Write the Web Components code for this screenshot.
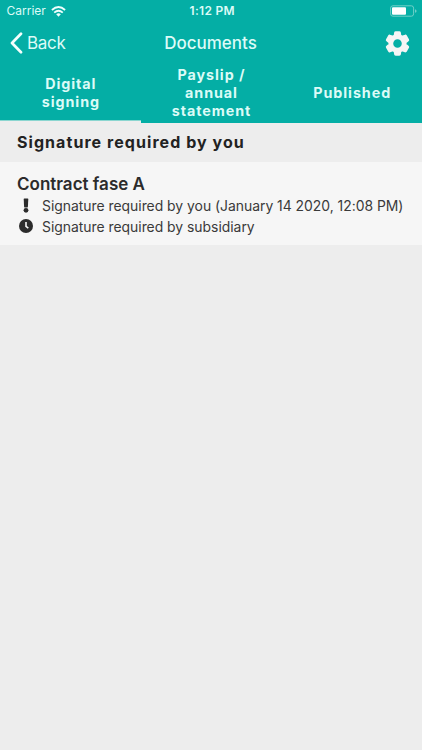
<!DOCTYPE html>
<html lang="en"><head><meta charset="utf-8"><title>Documents</title>
<style>html,body{margin:0;height:100%;background:#ededed;overflow:hidden}</style></head>
<body><documents-screen></documents-screen>
<script>
const define = (name, html) => {
  const t = document.createElement('template');
  t.innerHTML = html;
  customElements.define(name, class extends HTMLElement {
    constructor() {
      super();
      this.attachShadow({mode: 'open'}).append(t.content.cloneNode(true));
    }
  });
};

define('status-bar', `<style>
:host{display:grid;grid-template-columns:1fr auto 1fr;align-items:center;height:22px;padding:0 5px 0 6.5px;box-sizing:border-box;font-size:12px;line-height:22px;color:#dcfbf7}
.l{display:flex;align-items:center;gap:5px;letter-spacing:0}
.t{font-weight:600;letter-spacing:.3px;padding-left:1px}
.r{justify-self:end;display:flex}
svg{display:block}
</style>
<div class="l"><span>Carrier</span><svg width="15" height="11" viewBox="0 0 15 11" fill="none" stroke="#effffd" stroke-width="1.8"><path d="M.9 4Q7.500-1.900 14.100 4M3.200 6.600Q7.500 2.800 11.800 6.600"/><path d="M5.200 8.300Q7.500 6.400 9.800 8.300L7.500 10.800Z" fill="#effffd" stroke="none"/></svg></div>
<span class="t">1:12 PM</span>
<div class="r"><svg width="27" height="12" viewBox="0 0 27 12"><rect x=".6" y=".8" width="23" height="10.4" rx="2.3" fill="none" stroke="#70d0c8" stroke-width="1"/><rect x="2" y="2.2" width="14" height="7.6" rx="1" fill="#fff"/><path d="M25 4.2Q26.6 4.6 26.6 6T25 7.8Z" fill="#70d0c8"/></svg></div>`);

define('nav-bar', `<style>
:host{display:grid;grid-template-columns:1fr auto 1fr;align-items:center;height:42px;padding:0 11px 0 10px;box-sizing:border-box;font-size:17px;line-height:42px;color:#dcfbf7}
.b{display:flex;align-items:center;gap:4px;letter-spacing:-.3px}
.t{font-weight:500}
.g{justify-self:end}
svg{display:block}
</style>
<div class="b"><svg width="13" height="22" viewBox="0 0 13 22"><path d="M11 1.8 2 11l9 9.2" fill="none" stroke="#f4fffd" stroke-width="2.7" stroke-linecap="round" stroke-linejoin="round"/></svg><span><slot name="back"></slot></span></div>
<span class="t"><slot></slot></span>
<svg class="g" width="27" height="27" viewBox="0 0 24 24"><path fill="#f5f5f5" stroke="#f5f5f5" stroke-width="1.8" stroke-linejoin="round" fill-rule="evenodd" d="M19.1 13a7.5 7.5 0 0 0 0-2l2.2-1.7c.2-.1.2-.4.1-.6l-2-3.5c-.1-.2-.4-.3-.6-.2l-2.5 1a7.300 7.300 0 0 0-1.800-1l-.4-2.600A.5.5 0 0 0 13.600 2h-3.200a.5.5 0 0 0-.5.400L9.500 5a7.300 7.300 0 0 0-1.800 1l-2.500-1c-.2-.1-.5 0-.6.2l-2 3.500c-.1.200-.1.500.1.600L4.900 11a7.500 7.500 0 0 0 0 2l-2.200 1.700c-.2.1-.2.400-.1.600l2 3.500c.1.200.4.300.6.200l2.500-1c.5.400 1.100.800 1.800 1l.4 2.600c0 .200.200.400.500.400h3.200c.3 0 .5-.2.5-.4l.4-2.600c.7-.2 1.300-.6 1.800-1l2.500 1c.2.1.5 0 .6-.2l2-3.500c.1-.2.1-.5-.1-.6ZM12 16.700a4.700 4.700 0 1 1 0-9.400 4.700 4.700 0 0 1 0 9.400Z"/></svg>`);

define('tab-item', `<style>
:host{display:flex;align-items:center;justify-content:center;text-align:center;box-sizing:border-box;height:58px;padding-left:1px;font-size:14.3px;line-height:18px;font-weight:700;letter-spacing:.95px;color:#dcfbf7;white-space:pre-line}
</style><span><slot></slot></span>`);

define('tab-strip', `<style>
:host{display:grid;grid-template-columns:repeat(3,1fr);height:59px;position:relative}
.ink{position:absolute;left:0;bottom:0;width:141px;height:3px;background:#ededed;border-top:1px solid #8bd6d0;box-sizing:border-box}
</style><slot></slot><div class="ink"></div>`);

define('section-header', `<style>
:host{display:block;box-sizing:border-box;height:39px;padding:0 17px;line-height:39px;font-size:16px;font-weight:700;letter-spacing:1.06px;color:#222;background:#ededed}
</style><slot></slot>`);

define('status-row', `<style>
:host{display:flex;align-items:center;height:20.500px;font-size:13.950px;color:#3a3a3a;letter-spacing:-.03px;white-space:nowrap}
.i{width:17px;margin-right:8px;display:flex;justify-content:center}
</style><span class="i"><slot name="icon"></slot></span><span><slot></slot></span>`);

define('document-card', `<style>
:host{display:block;box-sizing:border-box;height:83px;padding:11px 0 0 17px;background:#f6f6f6}
h2{margin:0;height:22.500px;line-height:23px;font-size:17px;font-weight:600;color:#2b2b2b}
</style><h2><slot name="title"></slot></h2><slot></slot>`);

define('documents-screen', `<style>
:host{display:block;width:422px;height:750px;background:#ededed;font-family:Inter,"Liberation Sans",sans-serif}
header{background:#04aea5;height:123px;box-sizing:border-box}
svg{display:block}
</style>
<header><status-bar></status-bar><nav-bar><span slot="back">Back</span>Documents</nav-bar>
<tab-strip><tab-item>Digital
signing</tab-item><tab-item>Payslip /
annual
statement</tab-item><tab-item>Published</tab-item></tab-strip></header>
<main><section-header>Signature required by you</section-header>
<document-card><span slot="title">Contract fase A</span>
<status-row><svg slot="icon" width="6" height="15" viewBox="0 0 6 15"><path d="M.7 1Q.7.400 1.300.400H4.700Q5.300.400 5.300 1L4.900 8.800Q4.850 9.400 4.300 9.400H1.700Q1.150 9.400 1.100 8.800Z" fill="#2b2b2b"/><circle cx="3" cy="12.300" r="2.400" fill="#2b2b2b"/></svg>Signature required by you (January 14 2020, 12:08 PM)</status-row>
<status-row><svg slot="icon" width="14" height="14" viewBox="0 0 14 14"><circle cx="7" cy="7" r="7" fill="#2b2b2b"/><path d="M7 3V7.400L9.300 9.200" fill="none" stroke="#f6f6f6" stroke-width="1.600"/></svg>Signature required by subsidiary</status-row>
</document-card></main>`);
</script></body></html>
